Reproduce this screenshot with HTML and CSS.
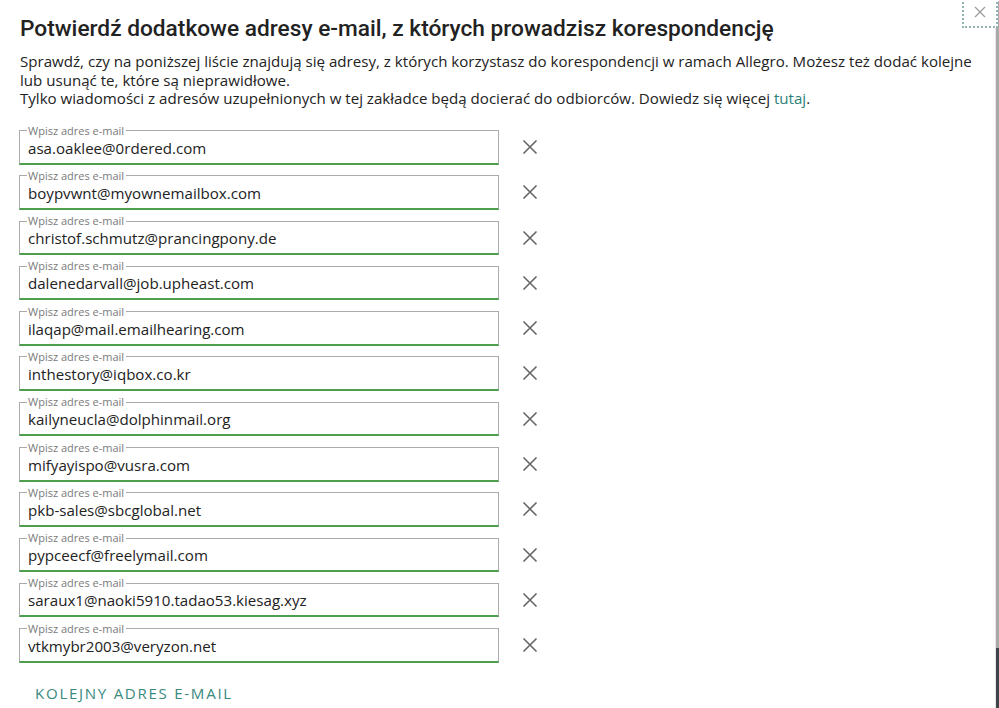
FILE: index.html
```html
<!DOCTYPE html>
<html lang="pl">
<head>
    <meta charset="UTF-8">
    <title>Potwierdź dodatkowe adresy e-mail</title>
    <link rel="stylesheet" href="styles.css">
</head>
<body>
<div class="dialog">
    <button class="close" aria-label="Zamknij">
        <svg width="12" height="12" viewBox="0 0 12 12"><path d="M1 1L11 11M11 1L1 11" stroke="#9a9a9a" stroke-width="1.2"/></svg>
    </button>
    <h1>Potwierdź dodatkowe adresy e-mail, z których prowadzisz korespondencję</h1>
    <p class="intro">
        Sprawdź, czy na poniższej liście znajdują się adresy, z których korzystasz do korespondencji w ramach Allegro. Możesz też dodać kolejne lub usunąć te, które są nieprawidłowe.<br>
        Tylko wiadomości z adresów uzupełnionych w tej zakładce będą docierać do odbiorców. Dowiedz się więcej <a href="#">tutaj</a>.
    </p>
    <form class="emails">
        <div class="row">
            <fieldset><legend>Wpisz adres e-mail</legend><input type="email" value="asa.oaklee@0rdered.com"></fieldset>
            <button type="button" class="remove" aria-label="Usuń"><svg width="16" height="16" viewBox="0 0 16 16"><path d="M1.5 1.5L14.5 14.5M14.5 1.5L1.5 14.5" stroke="#666" stroke-width="1.6"/></svg></button>
        </div>
        <div class="row">
            <fieldset><legend>Wpisz adres e-mail</legend><input type="email" value="boypvwnt@myownemailbox.com"></fieldset>
            <button type="button" class="remove" aria-label="Usuń"><svg width="16" height="16" viewBox="0 0 16 16"><path d="M1.5 1.5L14.5 14.5M14.5 1.5L1.5 14.5" stroke="#666" stroke-width="1.6"/></svg></button>
        </div>
        <div class="row">
            <fieldset><legend>Wpisz adres e-mail</legend><input type="email" value="christof.schmutz@prancingpony.de"></fieldset>
            <button type="button" class="remove" aria-label="Usuń"><svg width="16" height="16" viewBox="0 0 16 16"><path d="M1.5 1.5L14.5 14.5M14.5 1.5L1.5 14.5" stroke="#666" stroke-width="1.6"/></svg></button>
        </div>
        <div class="row">
            <fieldset><legend>Wpisz adres e-mail</legend><input type="email" value="dalenedarvall@job.upheast.com"></fieldset>
            <button type="button" class="remove" aria-label="Usuń"><svg width="16" height="16" viewBox="0 0 16 16"><path d="M1.5 1.5L14.5 14.5M14.5 1.5L1.5 14.5" stroke="#666" stroke-width="1.6"/></svg></button>
        </div>
        <div class="row">
            <fieldset><legend>Wpisz adres e-mail</legend><input type="email" value="ilaqap@mail.emailhearing.com"></fieldset>
            <button type="button" class="remove" aria-label="Usuń"><svg width="16" height="16" viewBox="0 0 16 16"><path d="M1.5 1.5L14.5 14.5M14.5 1.5L1.5 14.5" stroke="#666" stroke-width="1.6"/></svg></button>
        </div>
        <div class="row">
            <fieldset><legend>Wpisz adres e-mail</legend><input type="email" value="inthestory@iqbox.co.kr"></fieldset>
            <button type="button" class="remove" aria-label="Usuń"><svg width="16" height="16" viewBox="0 0 16 16"><path d="M1.5 1.5L14.5 14.5M14.5 1.5L1.5 14.5" stroke="#666" stroke-width="1.6"/></svg></button>
        </div>
        <div class="row">
            <fieldset><legend>Wpisz adres e-mail</legend><input type="email" value="kailyneucla@dolphinmail.org"></fieldset>
            <button type="button" class="remove" aria-label="Usuń"><svg width="16" height="16" viewBox="0 0 16 16"><path d="M1.5 1.5L14.5 14.5M14.5 1.5L1.5 14.5" stroke="#666" stroke-width="1.6"/></svg></button>
        </div>
        <div class="row">
            <fieldset><legend>Wpisz adres e-mail</legend><input type="email" value="mifyayispo@vusra.com"></fieldset>
            <button type="button" class="remove" aria-label="Usuń"><svg width="16" height="16" viewBox="0 0 16 16"><path d="M1.5 1.5L14.5 14.5M14.5 1.5L1.5 14.5" stroke="#666" stroke-width="1.6"/></svg></button>
        </div>
        <div class="row">
            <fieldset><legend>Wpisz adres e-mail</legend><input type="email" value="pkb-sales@sbcglobal.net"></fieldset>
            <button type="button" class="remove" aria-label="Usuń"><svg width="16" height="16" viewBox="0 0 16 16"><path d="M1.5 1.5L14.5 14.5M14.5 1.5L1.5 14.5" stroke="#666" stroke-width="1.6"/></svg></button>
        </div>
        <div class="row">
            <fieldset><legend>Wpisz adres e-mail</legend><input type="email" value="pypceecf@freelymail.com"></fieldset>
            <button type="button" class="remove" aria-label="Usuń"><svg width="16" height="16" viewBox="0 0 16 16"><path d="M1.5 1.5L14.5 14.5M14.5 1.5L1.5 14.5" stroke="#666" stroke-width="1.6"/></svg></button>
        </div>
        <div class="row">
            <fieldset><legend>Wpisz adres e-mail</legend><input type="email" value="saraux1@naoki5910.tadao53.kiesag.xyz"></fieldset>
            <button type="button" class="remove" aria-label="Usuń"><svg width="16" height="16" viewBox="0 0 16 16"><path d="M1.5 1.5L14.5 14.5M14.5 1.5L1.5 14.5" stroke="#666" stroke-width="1.6"/></svg></button>
        </div>
        <div class="row">
            <fieldset><legend>Wpisz adres e-mail</legend><input type="email" value="vtkmybr2003@veryzon.net"></fieldset>
            <button type="button" class="remove" aria-label="Usuń"><svg width="16" height="16" viewBox="0 0 16 16"><path d="M1.5 1.5L14.5 14.5M14.5 1.5L1.5 14.5" stroke="#666" stroke-width="1.6"/></svg></button>
        </div>
        <button type="button" class="add">Kolejny adres e-mail</button>
    </form>
</div>
<div class="edge"></div>
</body>
</html>
```

FILE: styles.css
```css
* {
    box-sizing: border-box;
}

html, body {
    height: 100%;
}

body {
    margin: 0;
    background-color: white;
    font-family: 'Open Sans', sans-serif;
    color: #222;
    display: flex;
    overflow: hidden;
}

.dialog {
    flex: 1;
    padding: 14px 0 0 20px;
    display: flex;
    flex-direction: column;
}

.edge {
    width: 4px;
    background: linear-gradient(to bottom, #fff 0, #fff 1px, #a9a9a9 1px, #a9a9a9 648px, #3e4448 648px);
    border-left: 1px solid #e6e6e6;
}

.close {
    position: absolute;
    top: -2px;
    right: 1px;
    width: 36px;
    height: 30px;
    border: 2px dotted #8fb4b4;
    border-top: none;
    background: white;
    display: flex;
    align-items: center;
    justify-content: center;
    padding: 0;
    cursor: pointer;
}

h1 {
    margin: 0;
    font-family: Roboto, sans-serif;
    font-weight: 500;
    font-size: 22.7px;
    line-height: 30px;
    color: #222;
}

.intro {
    margin: 8px 0 0;
    font-size: 15.1px;
    line-height: 18.5px;
    color: #222;
    padding-right: 16px;
}

.intro a {
    color: #2b8077;
    text-decoration: none;
}

.emails {
    margin-top: 17px;
    display: flex;
    flex-direction: column;
    gap: 5.3px;
}

.row {
    display: flex;
    align-items: center;
}

fieldset {
    width: 480px;
    margin: 0 0 0 -1px;
    border: 1px solid #ababab;
    border-bottom: 2px solid #4d9e4d;
    padding: 0 8px 0 7px;
    min-width: 0;
}

legend {
    font-size: 11px;
    line-height: 12px;
    color: #7a7a7a;
    padding: 0 2px 0 1px;
}

fieldset input {
    display: block;
    width: 100%;
    border: none;
    outline: none;
    padding: 0 0 3px 1px;
    height: 27px;
    margin-top: -1px;
    font-family: 'Open Sans', sans-serif;
    font-size: 15.1px;
    color: #222;
    background: transparent;
}

.remove {
    margin-left: 21px;
    margin-top: 5px;
    width: 20px;
    height: 20px;
    border: none;
    background: none;
    padding: 2px;
    cursor: pointer;
}

.add {
    align-self: flex-start;
    margin: 15px 0 0 15px;
    border: none;
    background: none;
    padding: 0;
    font-family: 'Open Sans', sans-serif;
    font-size: 15.1px;
    letter-spacing: 1.7px;
    text-transform: uppercase;
    color: #3b8a80;
    cursor: pointer;
}
```
